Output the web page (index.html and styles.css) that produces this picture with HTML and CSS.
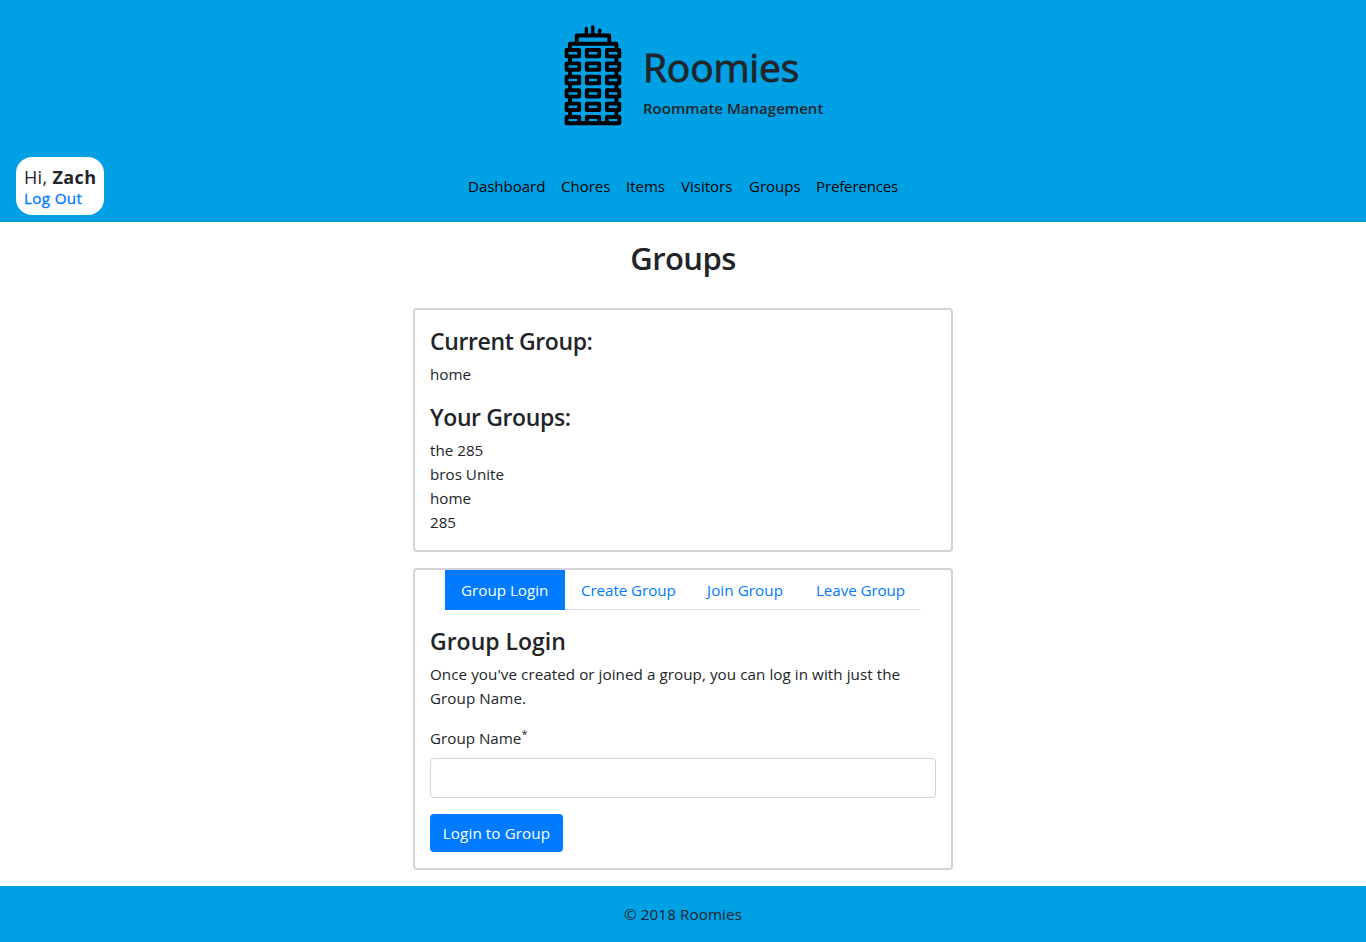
FILE: index.html
```html
<!DOCTYPE html>
<html lang="en">
<head>
<meta charset="utf-8">
<title>Roomies</title>
<link rel="stylesheet" href="styles.css">
</head>
<body>
<header class="header">
  <div class="brand">
    <svg class="logo" width="60" height="102" viewBox="8 9 60 102" fill="none" stroke="#000" stroke-width="3.9" stroke-linejoin="round" stroke-linecap="round">
      <path stroke-width="3.3" d="M31.3 13.5V20M37.8 11.8V20M44.7 15.2V20"/>
      <path d="M21.7 28V20.5H54.2V28M15 34V28.8H61.4V34"/>
      <path d="M15 42V48M15 55.4V61.4M15 68.8V74.8M15 82.2V88.2M15 95.6V101.6M61.4 42V48M61.4 55.4V61.4M61.4 68.8V74.8M61.4 82.2V88.2M61.4 95.6V101.6"/>
      <path d="M11.6 35h12.6v6.4H11.6zM31.8 35h12.4v6.4H31.8zM51.9 35h12.4v6.4H51.9z"/>
      <path d="M11.6 48.4h12.6v6.4H11.6zM31.8 48.4h12.4v6.4H31.8zM51.9 48.4h12.4v6.4H51.9z"/>
      <path d="M11.6 61.8h12.6v6.4H11.6zM31.8 61.8h12.4v6.4H31.8zM51.9 61.8h12.4v6.4H51.9z"/>
      <path d="M11.6 75.2h12.6v6.4H11.6zM31.8 75.2h12.4v6.4H31.8zM51.9 75.2h12.4v6.4H51.9z"/>
      <path d="M11.6 88.6h12.6V95H11.6zM31.8 88.6h12.4V95H31.8zM51.9 88.6h12.4V95H51.9z"/>
      <path d="M11.6 108.2V102h12.6v6.2M31.8 108.2V102h12.4v6.2M51.9 108.2V102h12.4v6.2M11.6 108.2H64.3"/>
    </svg>
    <div class="brand-text">
      <h1 class="brand-name">Roomies</h1>
      <p class="tagline">Roommate Management</p>
    </div>
  </div>
  <div class="bar">
    <div class="user">
      <div class="hello">Hi, <b>Zach</b></div>
      <a class="logout">Log Out</a>
    </div>
    <nav class="nav">
      <a class="n1">Dashboard</a><a class="n2">Chores</a><a class="n3">Items</a><a class="n4">Visitors</a><a class="n5">Groups</a><a class="n6">Preferences</a>
    </nav>
  </div>
</header>
<main class="main">
  <h2 class="page-title">Groups</h2>
  <section class="card">
    <h4 class="heading">Current Group:</h4>
    <p class="text">home</p>
    <h4 class="heading">Your Groups:</h4>
    <ul class="groups"><li>the 285</li><li>bros Unite</li><li>home</li><li>285</li></ul>
  </section>
  <section class="card forms">
    <div class="tabs">
      <a class="tab t1 active">Group Login</a><a class="tab t2">Create Group</a><a class="tab t3">Join Group</a><a class="tab t4">Leave Group</a>
    </div>
    <h4 class="heading login-heading">Group Login</h4>
    <p class="text intro">Once you've created or joined a group, you can log in with just the<br>Group Name.</p>
    <label class="label" for="group">Group Name<sup>*</sup></label>
    <input class="input" id="group" type="text">
    <button class="button" type="button">Login to Group</button>
  </section>
</main>
<footer class="footer">© 2018 Roomies</footer>
</body>
</html>
```
FILE: styles.css
```css
* { box-sizing: border-box; }
body {
  margin: 0;
  min-height: 942px;
  display: flex;
  flex-direction: column;
  background: #fff;
  color: #212529;
  font: 400 15.2px/24px "Open Sans", "Noto Sans", sans-serif;
}
h1, h2, h4, p, ul { margin: 0; padding: 0; }
a { color: #007bff; white-space: nowrap; }
.header { height: 222px; background: #00a0e4; padding-top: 24px; }
.brand { display: flex; padding-left: 563px; height: 133px; }
.logo { flex: none; }
.brand-text { padding: 19px 0 0 20px; }
.brand-name { font-size: 39px; line-height: 48px; font-weight: 400; letter-spacing: -.2px; -webkit-text-stroke: .8px #212529; }
.tagline { margin-top: 5px; font-size: 15px; line-height: 24px; font-weight: 600; letter-spacing: .03px; }
.bar { display: grid; grid-template-columns: 1fr auto 1fr; padding: 0 16px; }
.user { width: 88px; height: 58px; padding: 8px; background: #fff; border-radius: 16px; white-space: nowrap; }
.hello { font-size: 18px; line-height: 24px; letter-spacing: .35px; }
.logout { display: block; line-height: 19px; letter-spacing: .35px; -webkit-text-stroke: .3px #007bff; }
.nav { display: flex; gap: 16px; padding-top: 17px; }
.nav a { color: #000; font-size: 15px; }
.nav .n6 { letter-spacing: -.13px; }
.n1 { width: 77px; } .n2 { width: 49px; } .n3 { width: 39px; } .n4 { width: 52px; } .n5 { width: 51px; } .n6 { width: 82px; }
.main { width: 540px; margin: 0 auto; padding-top: 15px; flex: 1; }
.page-title { font-size: 31px; line-height: 42px; font-weight: 600; letter-spacing: -.6px; text-align: center; margin-bottom: 29px; }
.card { border: 2px solid #d3d3d3; border-radius: 4px; padding: 14px 15px; height: 244px; margin-bottom: 16px; }
.heading { font-size: 23px; line-height: 34px; font-weight: 600; letter-spacing: -.38px; margin-bottom: 4px; }
.login-heading { letter-spacing: 0; }
.text { margin-bottom: 14px; white-space: nowrap; }
.groups { list-style: none; }
.forms { height: 302px; padding-top: 0; }
.tabs { display: flex; width: 476px; height: 40px; margin: 0 0 14px 15px; border-bottom: 1px solid #dee2e6; }
.tab { height: 40px; padding: 8px 0 8px 16px; }
.active { background: #007bff; color: #fff; }
.t1 { width: 120px; } .t2 { width: 126px; letter-spacing: -.08px; } .t3 { width: 109px; letter-spacing: .08px; } .t4 { width: 121px; letter-spacing: -.08px; }
.label { display: block; height: 24px; margin: 2px 0 8px; }
.forms .text { margin-bottom: 16px; letter-spacing: .06px; }
.label sup { font-size: 11px; line-height: 0; vertical-align: 6px; }
.input { display: block; width: 506px; height: 40px; border: 1px solid #ced4da; border-radius: 4px; margin-bottom: 16px; }
.button { width: 133px; height: 38px; border: 0; border-radius: 4px; background: #007bff; color: #fff; font: inherit; letter-spacing: .1px; padding: 0; white-space: nowrap; }
.footer { height: 56px; background: #00a0e4; text-align: center; padding-top: 16px; letter-spacing: .1px; }
```
